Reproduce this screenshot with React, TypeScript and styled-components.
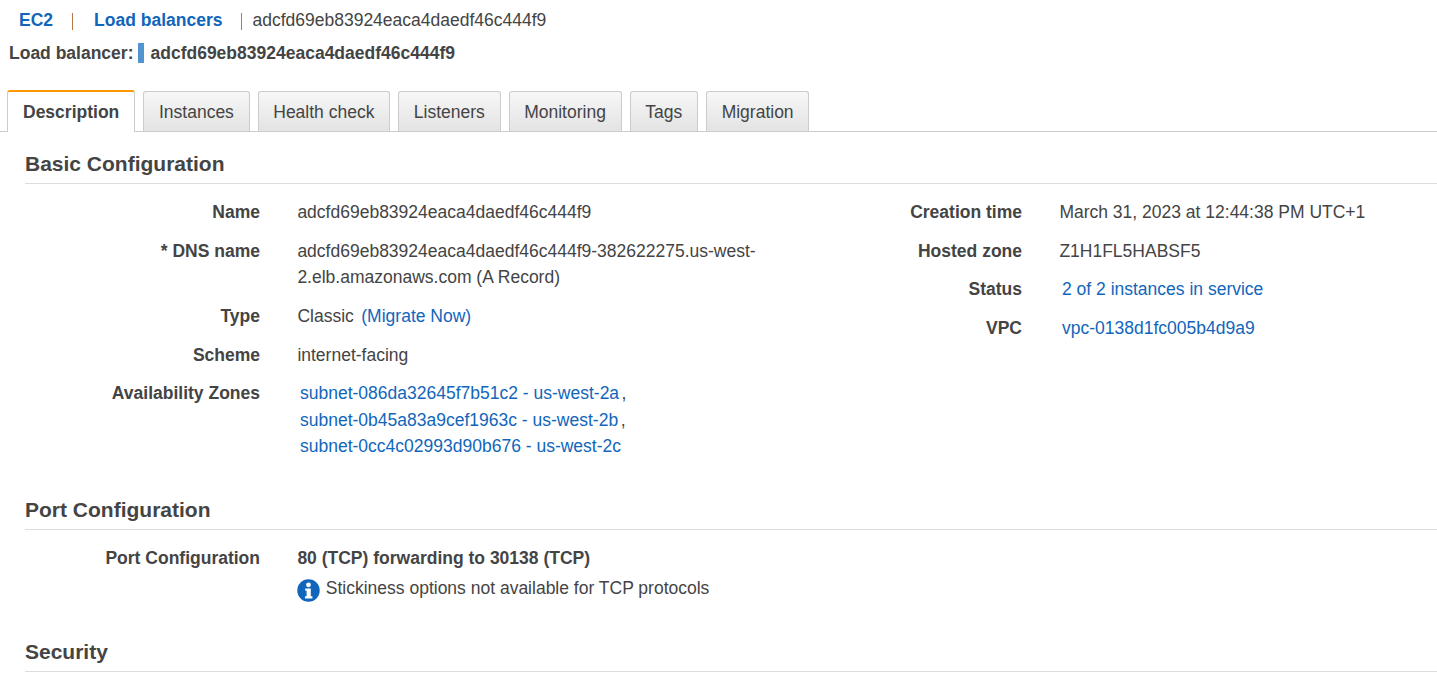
import React from "react";
import styled, { createGlobalStyle } from "styled-components";

const Global = createGlobalStyle`
  html, body { margin: 0; padding: 0; background: #fff; overflow: hidden; }
  body { font-family: "Liberation Sans", Arial, sans-serif; font-size: 17.5px; color: #444; }
`;
const Page = styled.div`width: 1437px; height: 686px; overflow: hidden;`;
const Crumbs = styled.div`display: flex; align-items: center; height: 26px; margin-top: 7px; padding-left: 19px; line-height: 26px;`;
const CrumbLink = styled.a`color: #1166bb; font-weight: 700;`;
const CrumbSep = styled.span<{ $gap: number; $after: number }>`
  width: 1px; height: 17px; margin-top: 2px; background: #b9774a; margin-left: ${p => p.$gap}px; margin-right: ${p => p.$after}px;
`;
const TitleRow = styled.div`display: flex; align-items: center; height: 26px; margin-top: 7px; padding-left: 9px; font-weight: 700;`;
const Marker = styled.span`width: 6px; height: 20px; background: #5294d0; margin: 0 6px 0 5px;`;
const Tabs = styled.div`display: flex; align-items: flex-end; gap: 8px; height: 41px; margin-top: 24px; padding-left: 7px; border-bottom: 1px solid #ccc; box-sizing: content-box;`;
const Tab = styled.div<{ $active?: boolean }>`
  box-sizing: border-box;
  padding: 0 14.7px;
  border: 1px solid #ccc;
  border-bottom: 0;
  border-radius: 3px 3px 0 0;
  color: #444;
  ${p => p.$active
    ? `font-weight:700;background:#fff;border-top:2px solid #f90;margin-bottom:-1px;height:42px;line-height:40px;padding:0 15px;`
    : `background:linear-gradient(#f7f7f7,#e3e3e3);height:40px;line-height:41px;`}
`;
const Section = styled.section<{ $top: number }>`margin: ${p => p.$top}px 0 0 25px;`;
const Heading = styled.h2`
  margin: 0; font-size: 21px; font-weight: 700; color: #444; height: 37px; line-height: 36px; border-bottom: 1px solid #ddd; box-sizing: content-box;
`;
const Columns = styled.div`display: flex; padding-top: 15px;`;
const Col = styled.div<{ $w: number }>`width: ${p => p.$w}px; display: flex; flex-direction: column; gap: 12.3px;`;
const Row = styled.div`display: grid; grid-template-columns: 235px 1fr; column-gap: 37.4px; line-height: 26.4px;`;
const Label = styled.div`text-align: right; font-weight: 700;`;
const Value = styled.div<{ $inset?: boolean; $bold?: boolean }>`
  padding-left: ${p => (p.$inset ? 2.6 : 0)}px; font-weight: ${p => (p.$bold ? 700 : 400)}; white-space: nowrap;
`;
const Link = styled.a`color: #1166bb;`;
const MigrateLink = styled(Link)`margin-left: 7.5px;`;
const Comma = styled.span`margin-left: 2.5px;`;
const Note = styled.div`display: flex; align-items: flex-start; gap: 5.4px; margin-top: 3px;`;
const InfoSvg = styled.svg`margin-top: 4px; flex: none;`;

const InfoIcon = () => (
  <InfoSvg width="23" height="23" viewBox="0 0 23 23">
    <circle cx="11.5" cy="11.5" r="11.2" fill="#1166bb" />
    <circle cx="11.5" cy="5.8" r="2.4" fill="#fff" />
    <path d="M8.2 9.4h5.6v7.8h1.6v2.4H8v-2.4h1.6v-5.4H8.2z" fill="#fff" />
  </InfoSvg>
);

export default function App() {
  return (
    <Page>
      <Global />
      <Crumbs>
        <CrumbLink>EC2</CrumbLink>
        <CrumbSep $gap={19} $after={21} />
        <CrumbLink>Load balancers</CrumbLink>
        <CrumbSep $gap={19} $after={10} />
        <span>adcfd69eb83924eaca4daedf46c444f9</span>
      </Crumbs>
      <TitleRow>
        Load balancer:<Marker />adcfd69eb83924eaca4daedf46c444f9
      </TitleRow>
      <Tabs>
        <Tab $active>Description</Tab>
        <Tab>Instances</Tab>
        <Tab>Health check</Tab>
        <Tab>Listeners</Tab>
        <Tab>Monitoring</Tab>
        <Tab>Tags</Tab>
        <Tab>Migration</Tab>
      </Tabs>
      <Section $top={14}>
        <Heading>Basic Configuration</Heading>
        <Columns>
          <Col $w={762}>
            <Row><Label>Name</Label><Value>adcfd69eb83924eaca4daedf46c444f9</Value></Row>
            <Row>
              <Label>* DNS name</Label>
              <Value>adcfd69eb83924eaca4daedf46c444f9-382622275.us-west-<br />2.elb.amazonaws.com (A Record)</Value>
            </Row>
            <Row><Label>Type</Label><Value>Classic<MigrateLink>(Migrate Now)</MigrateLink></Value></Row>
            <Row><Label>Scheme</Label><Value>internet-facing</Value></Row>
            <Row>
              <Label>Availability Zones</Label>
              <Value $inset>
                <Link>subnet-086da32645f7b51c2 - us-west-2a</Link><Comma>,</Comma><br />
                <Link>subnet-0b45a83a9cef1963c - us-west-2b</Link><Comma>,</Comma><br />
                <Link>subnet-0cc4c02993d90b676 - us-west-2c</Link>
              </Value>
            </Row>
          </Col>
          <Col $w={625}>
            <Row><Label>Creation time</Label><Value>March 31, 2023 at 12:44:38 PM UTC+1</Value></Row>
            <Row><Label>Hosted zone</Label><Value>Z1H1FL5HABSF5</Value></Row>
            <Row><Label>Status</Label><Value $inset><Link>2 of 2 instances in service</Link></Value></Row>
            <Row><Label>VPC</Label><Value $inset><Link>vpc-0138d1fc005b4d9a9</Link></Value></Row>
          </Col>
        </Columns>
      </Section>
      <Section $top={33}>
        <Heading>Port Configuration</Heading>
        <Columns>
          <Col $w={1000}>
            <Row>
              <Label>Port Configuration</Label>
              <div>
                <Value $bold>80 (TCP) forwarding to 30138 (TCP)</Value>
                <Note><InfoIcon />Stickiness options not available for TCP protocols</Note>
              </div>
            </Row>
          </Col>
        </Columns>
      </Section>
      <Section $top={32.5}>
        <Heading>Security</Heading>
      </Section>
    </Page>
  );
}
